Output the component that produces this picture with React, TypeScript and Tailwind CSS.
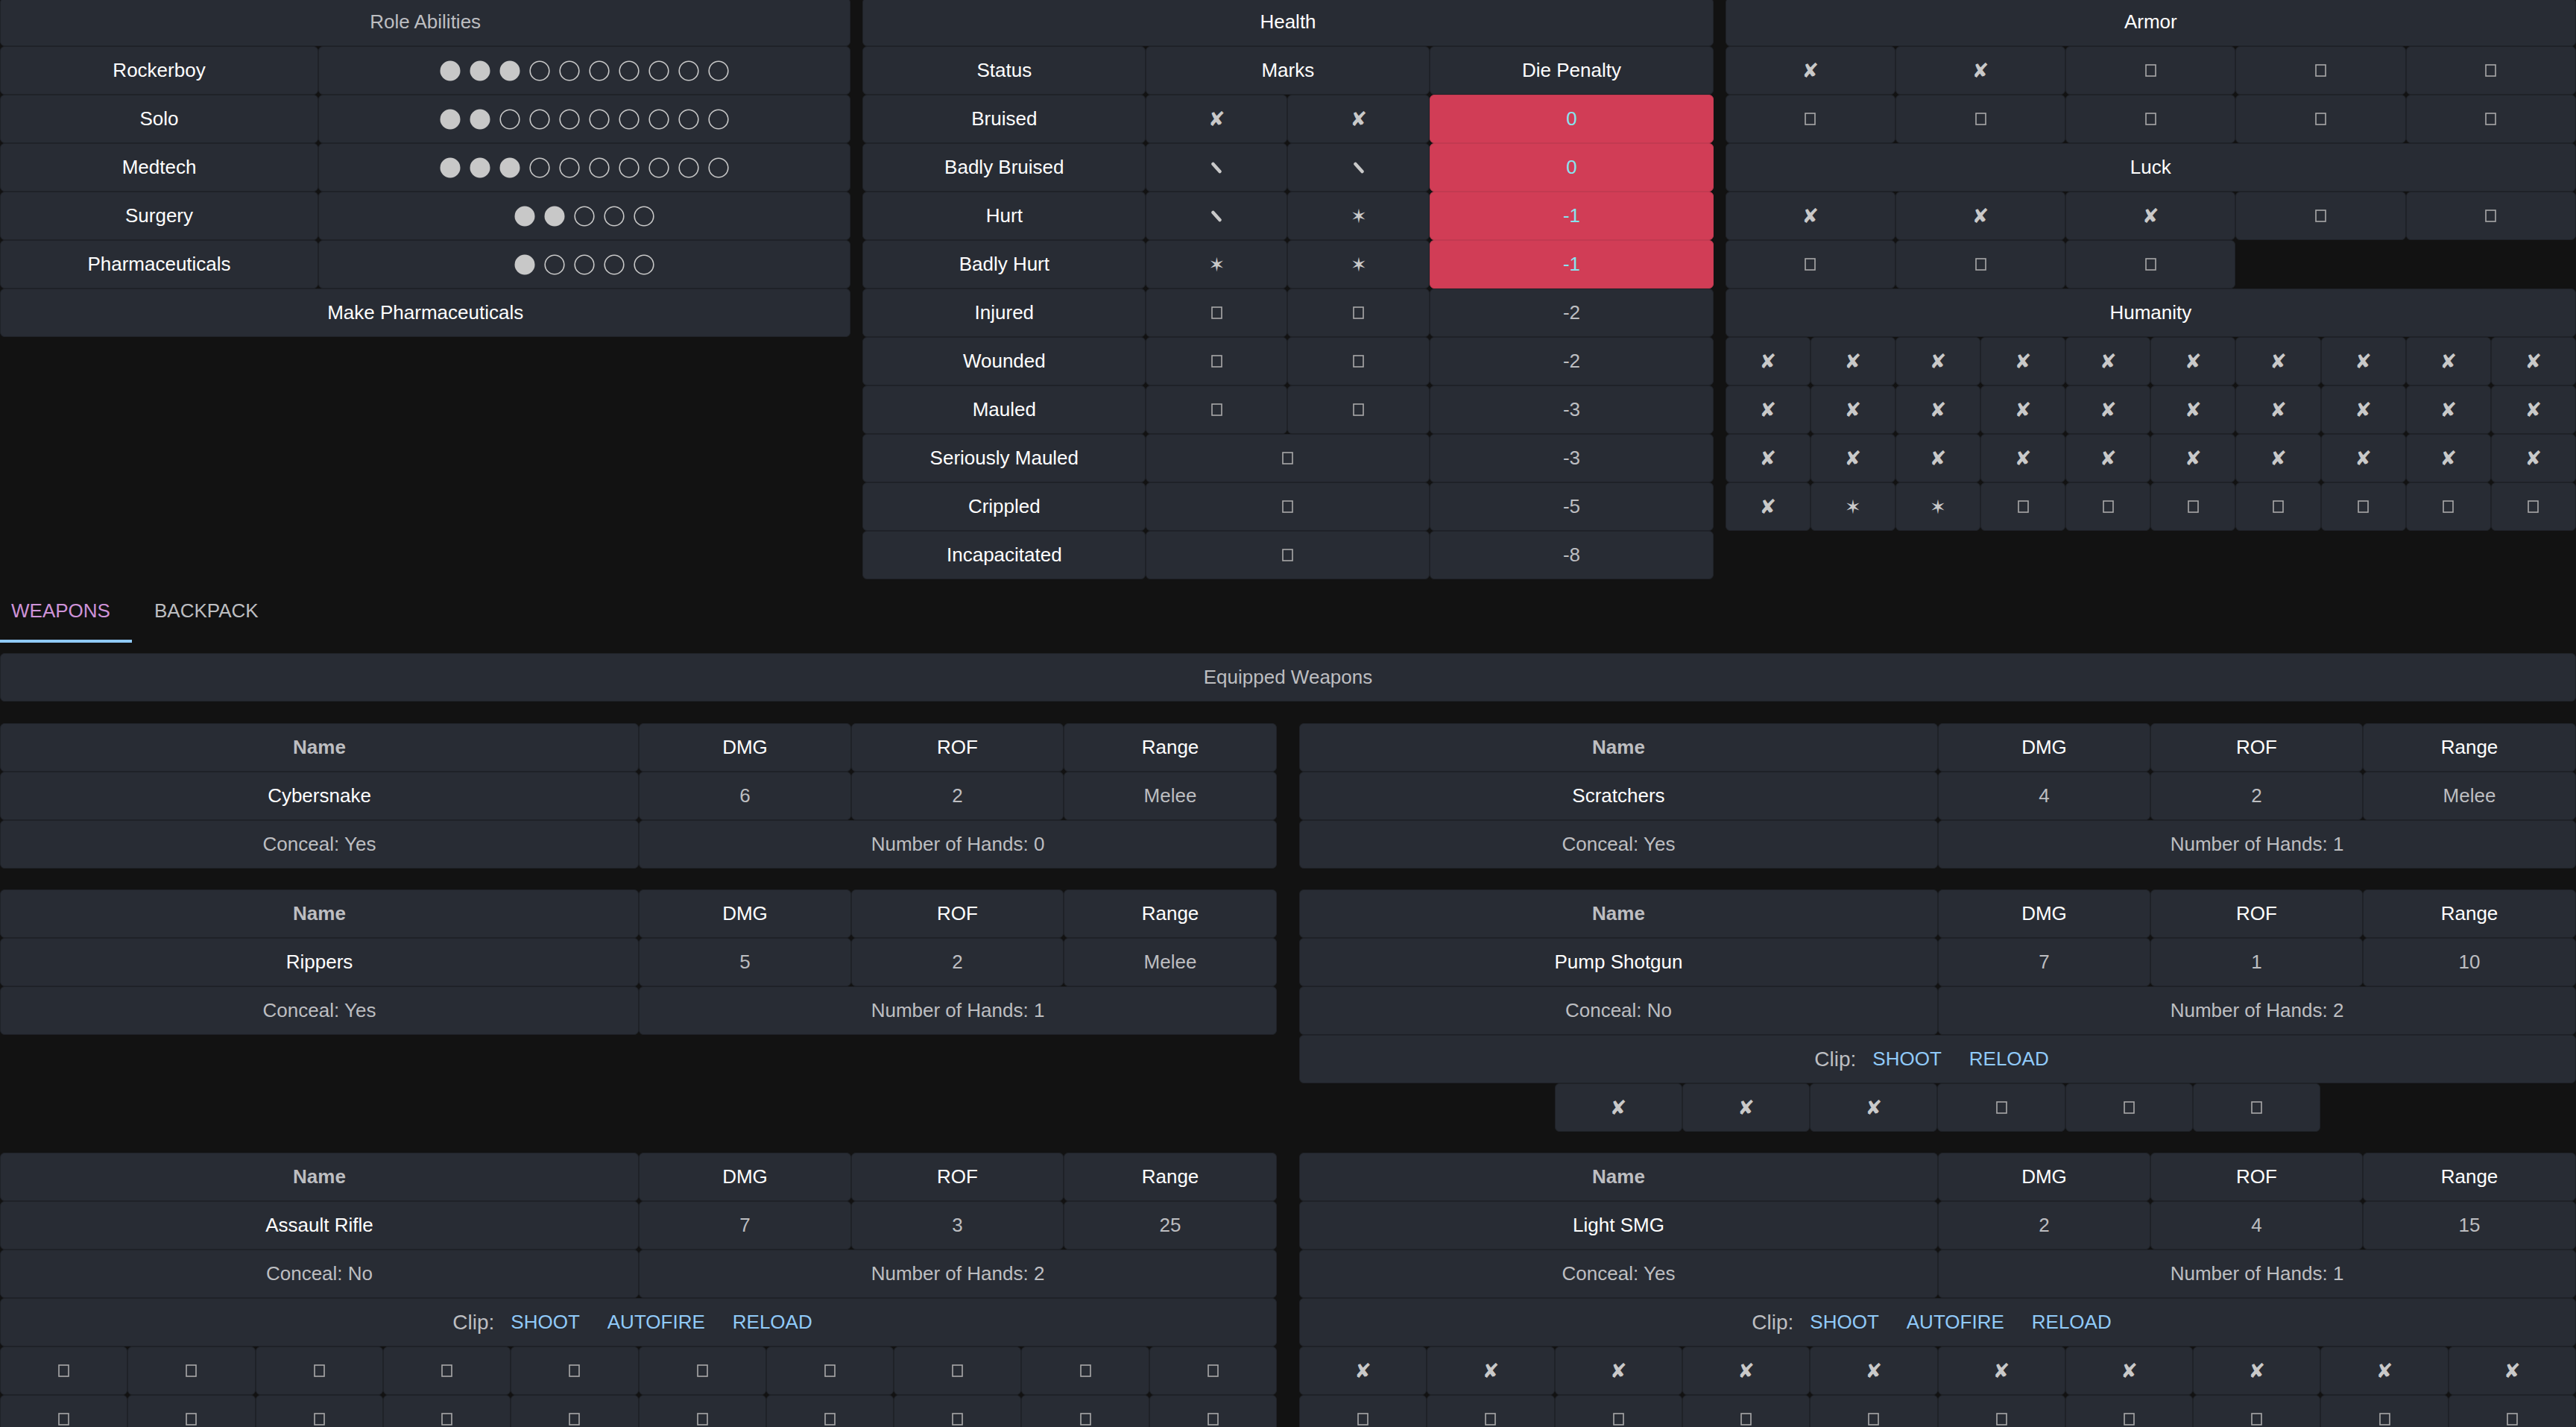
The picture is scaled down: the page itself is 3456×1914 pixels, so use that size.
import React from "react";

type Mark = "x" | "s" | "*" | "o";

function Cell({ className = "", children }: { className?: string; children?: React.ReactNode }) {
  return (
    <div
      className={`flex h-[65px] items-center justify-center rounded-[6px] border border-[#1f2228] bg-[#282c34] ${className}`}
    >
      {children}
    </div>
  );
}

function MarkGlyph({ m }: { m: Mark }) {
  if (m === "x")
    return <span className="font-['DejaVu_Sans',sans-serif] text-[27px] leading-none text-[#c9c9c9]">✘</span>;
  if (m === "*")
    return <span className="font-['DejaVu_Sans',sans-serif] text-[26px] leading-none text-[#c9c9c9]">✶</span>;
  if (m === "s")
    return (
      <svg width="16" height="16" viewBox="0 0 16 16">
        <line x1="3.5" y1="3" x2="12.5" y2="13" stroke="#c9c9c9" strokeWidth="4.5" strokeLinecap="round" />
      </svg>
    );
  return (
    <svg width="15" height="17" viewBox="0 0 15 17">
      <rect x="1" y="1" width="13" height="15" fill="none" stroke="#a9a9a9" strokeWidth="1.6" />
    </svg>
  );
}

function Dots({ filled, total }: { filled: number; total: number }) {
  return (
    <div className="flex gap-[12px]">
      {Array.from({ length: total }).map((_, i) => (
        <svg key={i} width="28" height="28" viewBox="0 0 28 28">
          {i < filled ? (
            <circle cx="14" cy="14" r="13.5" fill="#c8c8c8" />
          ) : (
            <circle cx="14" cy="14" r="12.8" fill="none" stroke="#c8c8c8" strokeWidth="1.6" />
          )}
        </svg>
      ))}
    </div>
  );
}

const roles: [string, number, number][] = [
  ["Rockerboy", 3, 10],
  ["Solo", 2, 10],
  ["Medtech", 3, 10],
  ["Surgery", 2, 5],
  ["Pharmaceuticals", 1, 5],
];

const health: { s: string; m: Mark[]; p: string; red?: boolean }[] = [
  { s: "Bruised", m: ["x", "x"], p: "0", red: true },
  { s: "Badly Bruised", m: ["s", "s"], p: "0", red: true },
  { s: "Hurt", m: ["s", "*"], p: "-1", red: true },
  { s: "Badly Hurt", m: ["*", "*"], p: "-1", red: true },
  { s: "Injured", m: ["o", "o"], p: "-2" },
  { s: "Wounded", m: ["o", "o"], p: "-2" },
  { s: "Mauled", m: ["o", "o"], p: "-3" },
  { s: "Seriously Mauled", m: ["o"], p: "-3" },
  { s: "Crippled", m: ["o"], p: "-5" },
  { s: "Incapacitated", m: ["o"], p: "-8" },
];

const armor: Mark[] = ["x", "x", "o", "o", "o", "o", "o", "o", "o", "o"];
const luck: Mark[] = ["x", "x", "x", "o", "o", "o", "o", "o"];
const humanity: Mark[] = [
  ...Array<Mark>(31).fill("x"),
  "*",
  "*",
  ...Array<Mark>(7).fill("o"),
];

type Weapon = {
  name: string;
  dmg: string;
  rof: string;
  range: string;
  conceal: string;
  hands: string;
  clip?: string[];
  ammo?: Mark[];
  narrow?: boolean;
};

const weapons: Weapon[] = [
  { name: "Cybersnake", dmg: "6", rof: "2", range: "Melee", conceal: "Yes", hands: "0" },
  { name: "Scratchers", dmg: "4", rof: "2", range: "Melee", conceal: "Yes", hands: "1" },
  { name: "Rippers", dmg: "5", rof: "2", range: "Melee", conceal: "Yes", hands: "1" },
  {
    name: "Pump Shotgun",
    dmg: "7",
    rof: "1",
    range: "10",
    conceal: "No",
    hands: "2",
    clip: ["SHOOT", "RELOAD"],
    ammo: ["x", "x", "x", "o", "o", "o"],
    narrow: true,
  },
  {
    name: "Assault Rifle",
    dmg: "7",
    rof: "3",
    range: "25",
    conceal: "No",
    hands: "2",
    clip: ["SHOOT", "AUTOFIRE", "RELOAD"],
    ammo: Array<Mark>(20).fill("o"),
  },
  {
    name: "Light SMG",
    dmg: "2",
    rof: "4",
    range: "15",
    conceal: "Yes",
    hands: "1",
    clip: ["SHOOT", "AUTOFIRE", "RELOAD"],
    ammo: [...Array<Mark>(10).fill("x"), ...Array<Mark>(10).fill("o")],
  },
];

function WeaponCard({ w }: { w: Weapon }) {
  return (
    <div className="flex flex-col">
      <div className="grid grid-cols-[857px_285px_285px_1fr]">
        <Cell className="font-bold text-[#bdbec1]">Name</Cell>
        <Cell className="text-white">DMG</Cell>
        <Cell className="text-white">ROF</Cell>
        <Cell className="text-white">Range</Cell>
        <Cell className="text-white">{w.name}</Cell>
        <Cell className="text-[#bdbec1]">{w.dmg}</Cell>
        <Cell className="text-[#bdbec1]">{w.rof}</Cell>
        <Cell className="text-[#bdbec1]">{w.range}</Cell>
        <Cell className="text-[#bdbec1]">Conceal: {w.conceal}</Cell>
        <Cell className="col-span-3 text-[#bdbec1]">Number of Hands: {w.hands}</Cell>
        {w.clip && (
          <Cell className="col-span-4">
            <span className="mr-[6px] text-[28px] text-[#bdbec1]">Clip:</span>
            <div className="flex gap-[5px]">
              {w.clip.map((b) => (
                <span key={b} className="px-[16px] text-[#90caf9]">
                  {b}
                </span>
              ))}
            </div>
          </Cell>
        )}
        {w.ammo && !w.narrow && (
          <div className="col-span-4 grid grid-cols-10">
            {w.ammo.map((m, i) => (
              <Cell key={i}>
                <MarkGlyph m={m} />
              </Cell>
            ))}
          </div>
        )}
      </div>
      {w.ammo && w.narrow && (
        <div className="mx-auto grid w-[1028px] grid-cols-6">
          {w.ammo.map((m, i) => (
            <Cell key={i}>
              <MarkGlyph m={m} />
            </Cell>
          ))}
        </div>
      )}
    </div>
  );
}

export default function App() {
  return (
    <div className="h-[1914px] overflow-hidden bg-[#121212] font-['Liberation_Sans',Arial,sans-serif] text-[26px] text-white">
      <div className="-mt-[3px] grid grid-cols-3 items-start gap-x-[16px]">
        {/* Role Abilities */}
        <div className="grid grid-cols-[427px_1fr]">
          <Cell className="col-span-2 text-[#bdbec1]">Role Abilities</Cell>
          {roles.map(([n, f, t]) => (
            <React.Fragment key={n}>
              <Cell className="text-white">{n}</Cell>
              <Cell>
                <Dots filled={f} total={t} />
              </Cell>
            </React.Fragment>
          ))}
          <Cell className="col-span-2 text-white">Make Pharmaceuticals</Cell>
        </div>

        {/* Health */}
        <div className="grid grid-cols-[380px_190px_191px_1fr]">
          <Cell className="col-span-4 text-white">Health</Cell>
          <Cell className="text-white">Status</Cell>
          <Cell className="col-span-2 text-white">Marks</Cell>
          <Cell className="text-white">Die Penalty</Cell>
          {health.map((r) => (
            <React.Fragment key={r.s}>
              <Cell className="text-white">{r.s}</Cell>
              {r.m.length === 2 ? (
                <>
                  <Cell>
                    <MarkGlyph m={r.m[0]} />
                  </Cell>
                  <Cell>
                    <MarkGlyph m={r.m[1]} />
                  </Cell>
                </>
              ) : (
                <Cell className="col-span-2">
                  <MarkGlyph m={r.m[0]} />
                </Cell>
              )}
              {r.red ? (
                <div className="flex h-[65px] items-center justify-center rounded-[6px] border border-[#c23a51] bg-[#d13d56] text-[#86e4ef]">
                  {r.p}
                </div>
              ) : (
                <Cell className="text-[#bdbec1]">{r.p}</Cell>
              )}
            </React.Fragment>
          ))}
        </div>

        {/* Armor / Luck / Humanity */}
        <div className="flex flex-col">
          <div className="grid grid-cols-5">
            <Cell className="col-span-5 text-white">Armor</Cell>
            {armor.map((m, i) => (
              <Cell key={i}>
                <MarkGlyph m={m} />
              </Cell>
            ))}
            <Cell className="col-span-5 text-white">Luck</Cell>
            {luck.map((m, i) => (
              <Cell key={i}>
                <MarkGlyph m={m} />
              </Cell>
            ))}
          </div>
          <Cell className="text-white">Humanity</Cell>
          <div className="grid grid-cols-10">
            {humanity.map((m, i) => (
              <Cell key={i}>
                <MarkGlyph m={m} />
              </Cell>
            ))}
          </div>
        </div>
      </div>

      {/* Tabs */}
      <div className="flex h-[85px]">
        <div className="relative flex w-[177px] items-center pl-[15px] text-[#ce93d8]">
          WEAPONS
          <span className="absolute bottom-0 left-0 h-[4px] w-full bg-[#90caf9]" />
        </div>
        <div className="flex items-center pl-[30px] text-[#bdbec1]">BACKPACK</div>
      </div>

      <Cell className="mt-[14px] text-[#bdbec1]">Equipped Weapons</Cell>

      <div className="mt-[29px] grid grid-cols-2 items-start gap-x-[30px] gap-y-[28px]">
        {weapons.map((w) => (
          <WeaponCard key={w.name} w={w} />
        ))}
      </div>
    </div>
  );
}
